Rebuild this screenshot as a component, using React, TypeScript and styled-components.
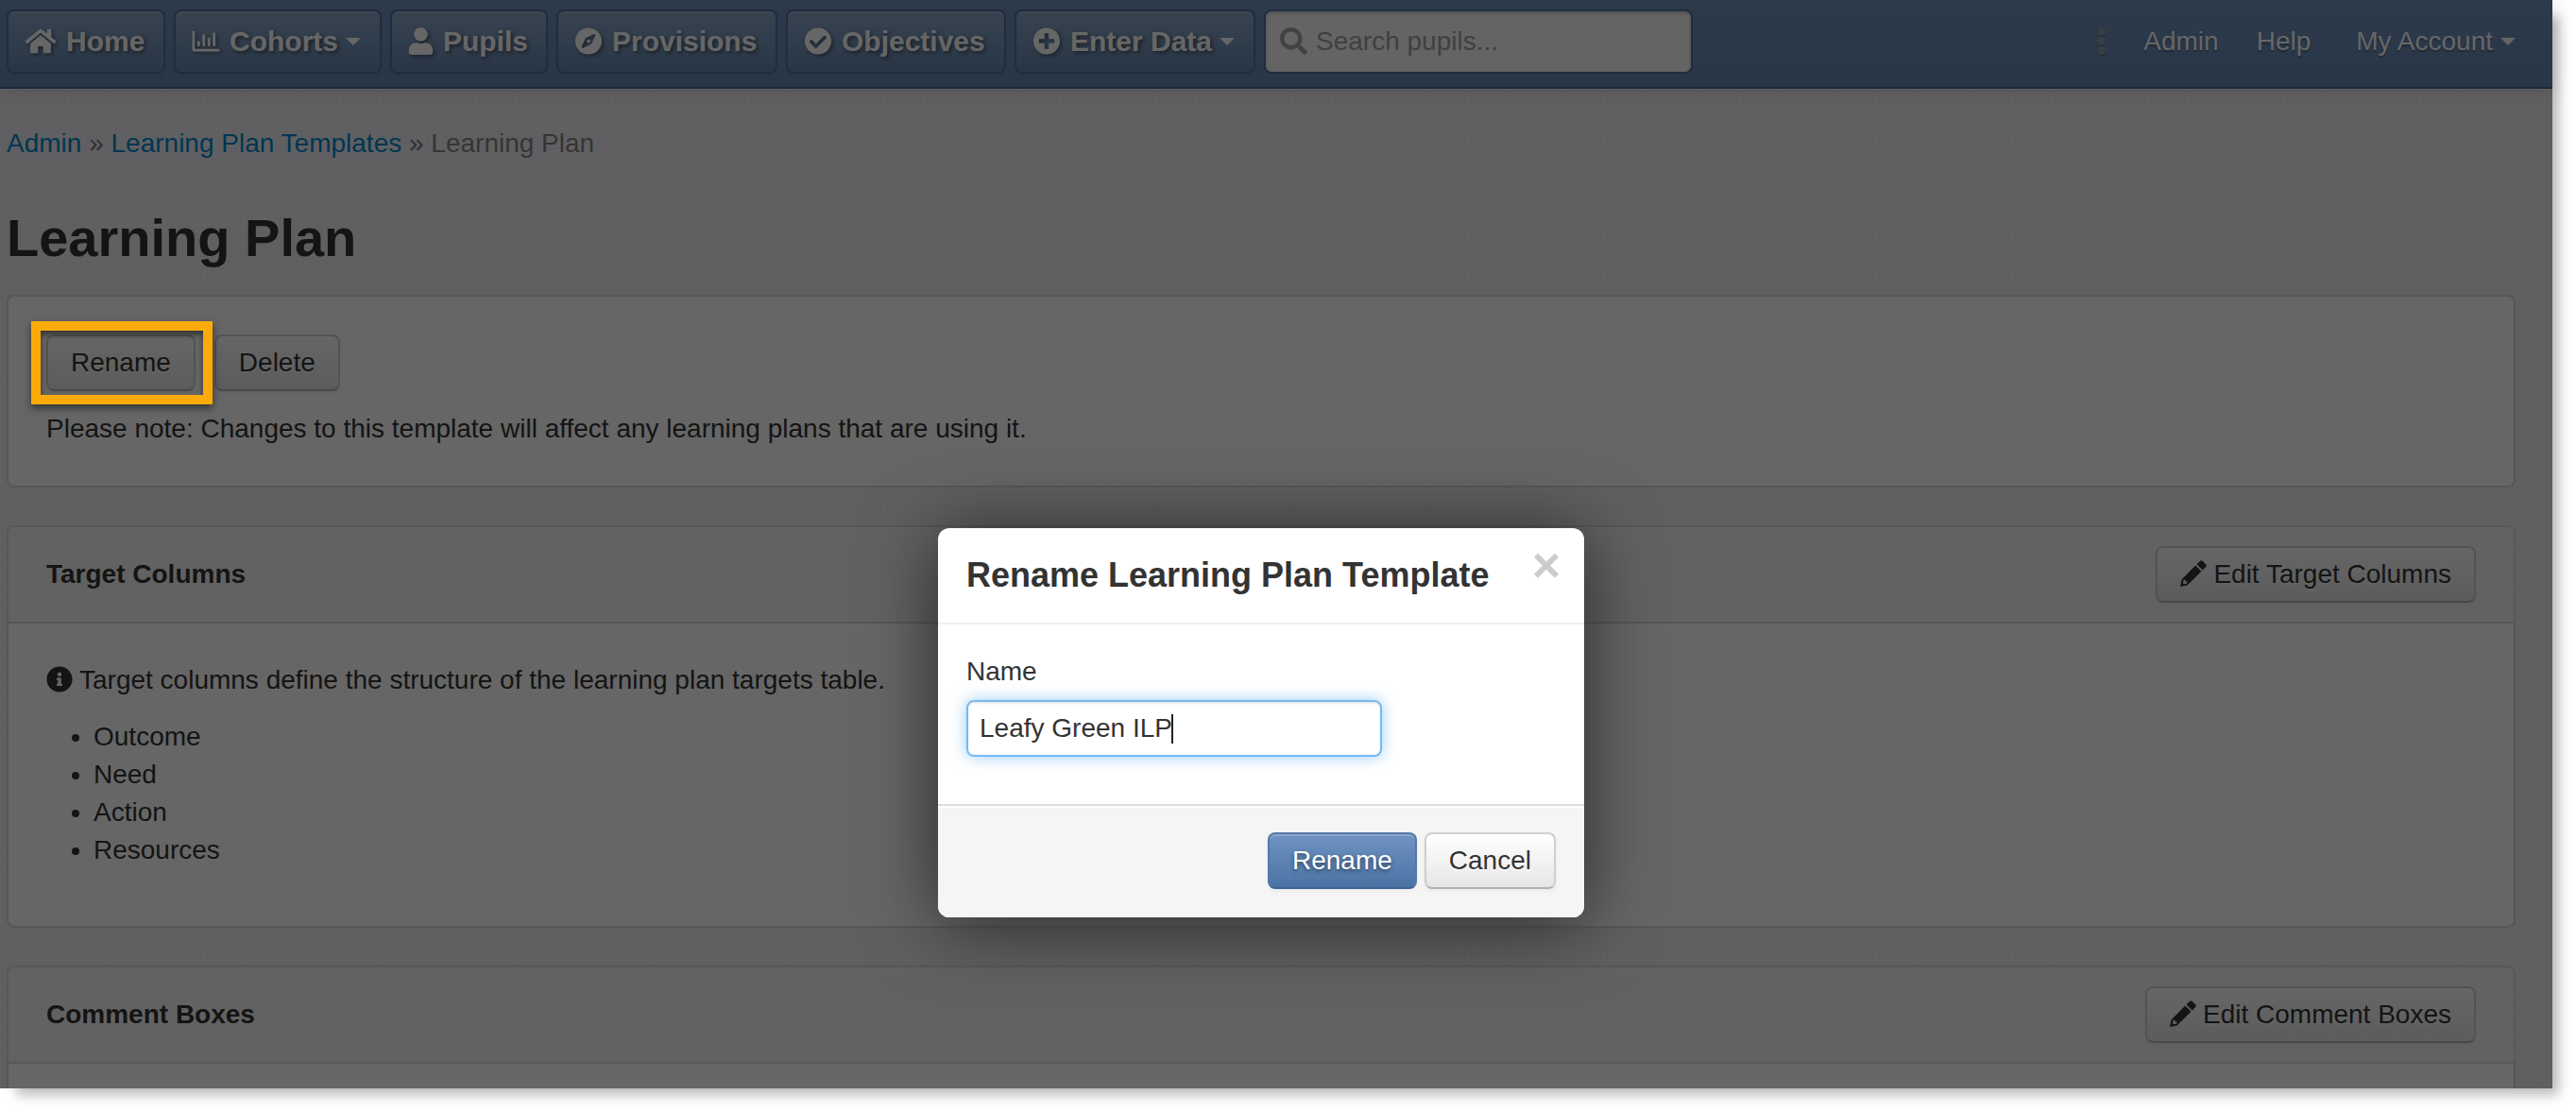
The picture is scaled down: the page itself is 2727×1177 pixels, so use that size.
import styled, { createGlobalStyle, css } from "styled-components";
import {
  FaHome,
  FaRegChartBar,
  FaUser,
  FaCompass,
  FaCheckCircle,
  FaPlusCircle,
  FaSearch,
  FaInfoCircle,
} from "react-icons/fa";

const navItems = [
  { label: "Home", icon: FaHome, iconWidth: 34, width: 168 },
  { label: "Cohorts", icon: FaRegChartBar, iconWidth: 30, caret: true, width: 220 },
  { label: "Pupils", icon: FaUser, iconWidth: 27, width: 167 },
  { label: "Provisions", icon: FaCompass, iconWidth: 30, width: 234 },
  { label: "Objectives", icon: FaCheckCircle, iconWidth: 30, width: 233 },
  { label: "Enter Data", icon: FaPlusCircle, iconWidth: 30, caret: true, width: 255 },
];

const targetColumns = ["Outcome", "Need", "Action", "Resources"];

const Pencil = () => (
  <svg viewBox="0 0 28 28" fill="currentColor">
    <path d="M17.5 4.2 20.8.9q1.5-1.3 3 0l3.3 3.3q1.3 1.4 0 2.9l-3.3 3.3z" />
    <path
      fillRule="evenodd"
      d="M16.2 5.5l6.3 6.3L7.5 26.6 0 28l1.5-7.6zM3.7 20.8l-.8 3.5 1 1 3.5-.8v-2.1H5.5v-1.6z"
    />
  </svg>
);

const App = () => {
  return (
    <>
      <GlobalStyle />
      <Window>
        <Navbar>
          <NavButtons>
            {navItems.map(({ label, icon: Icon, iconWidth, caret, width }) => (
              <NavButton key={label} $width={width} $iconWidth={iconWidth}>
                <Icon />
                <span>{label}</span>
                {caret && <Caret />}
              </NavButton>
            ))}
            <SearchBox>
              <FaSearch />
              <SearchInput placeholder="Search pupils..." />
            </SearchBox>
          </NavButtons>
          <NavLinks>
            <Dots>
              <i />
              <i />
              <i />
            </Dots>
            <NavLink>Admin</NavLink>
            <NavLink>Help</NavLink>
            <AccountLink>
              My Account
              <Caret />
            </AccountLink>
          </NavLinks>
        </Navbar>

        <Content>
          <Breadcrumb>
            <a>Admin</a> » <a>Learning Plan Templates</a> » <span>Learning Plan</span>
          </Breadcrumb>
          <Title>Learning Plan</Title>

          <Card>
            <CardBody>
              <ButtonRow>
                <Highlighted>
                  <Button>Rename</Button>
                </Highlighted>
                <Button>Delete</Button>
              </ButtonRow>
              <Note>
                Please note: Changes to this template will affect any learning plans that are using it.
              </Note>
            </CardBody>
          </Card>

          <Card>
            <CardHeader>
              <CardTitle>Target Columns</CardTitle>
              <Button>
                <Pencil />
                Edit Target Columns
              </Button>
            </CardHeader>
            <CardBody>
              <Info>
                <FaInfoCircle />
                Target columns define the structure of the learning plan targets table.
              </Info>
              <List>
                {targetColumns.map((column) => (
                  <li key={column}>{column}</li>
                ))}
              </List>
            </CardBody>
          </Card>

          <Card>
            <CardHeader>
              <CardTitle>Comment Boxes</CardTitle>
              <Button>
                <Pencil />
                Edit Comment Boxes
              </Button>
            </CardHeader>
            <CardBody />
          </Card>
        </Content>

        <Backdrop>
          <Modal>
            <ModalHeader>
              <ModalTitle>Rename Learning Plan Template</ModalTitle>
              <Close>×</Close>
            </ModalHeader>
            <ModalBody>
              <Label>Name</Label>
              <Field>
                Leafy Green ILP
                <Cursor />
              </Field>
            </ModalBody>
            <ModalFooter>
              <Button $primary>Rename</Button>
              <Button>Cancel</Button>
            </ModalFooter>
          </Modal>
        </Backdrop>
      </Window>
    </>
  );
};

export default App;

const GlobalStyle = createGlobalStyle`
  * {
    box-sizing: border-box;
  }

  body {
    margin: 0;
    min-height: 100vh;
    background: #fff;
    color: #333;
    font: 28px/40px "Liberation Sans", Arial, sans-serif;
  }
`;

const Window = styled.div`
  position: relative;
  width: 2702px;
  height: 1152px;
  box-shadow: 12px 12px 12px -5px rgba(0, 0, 0, 0.27);
`;

const Navbar = styled.header`
  display: flex;
  justify-content: space-between;
  height: 94px;
  padding: 10px 39px 0 7px;
  background: linear-gradient(#7091bc, #6489b5);
  border-bottom: 2px solid #4b6d9e;
  box-shadow: 0 2px 20px rgba(0, 0, 0, 0.12);
  position: relative;
`;

const NavButtons = styled.div`
  display: flex;
  gap: 9px;
`;

const NavButton = styled.div<{ $width: number; $iconWidth: number }>`
  display: flex;
  align-items: center;
  width: ${({ $width }) => $width}px;
  height: 68px;
  padding: 0 0 1px 17px;
  border: 2px solid #5070a0;
  border-radius: 8px;
  background: linear-gradient(#8ba8c5, #6687b2);
  box-shadow: inset 0 2px 0 rgba(255, 255, 255, 0.12), 0 2px 4px rgba(0, 0, 0, 0.05);
  color: #fff;
  font-size: 30px;
  font-weight: bold;
  white-space: nowrap;
  text-shadow: 2px 2px 4px rgba(0, 0, 0, 0.5);

  svg {
    flex: none;
    width: ${({ $iconWidth }) => $iconWidth}px;
    height: 29px;
    margin-right: 10px;
    filter: drop-shadow(2px 2px 2px rgba(0, 0, 0, 0.4));
  }
`;

const Caret = styled.i`
  width: 0;
  height: 0;
  margin-left: 8px;
  border: 8px solid transparent;
  border-top-color: #fff;
  border-bottom: 0;
`;

const SearchBox = styled.div`
  display: flex;
  align-items: center;
  width: 454px;
  height: 68px;
  padding: 0 15px 1px;
  border: 2px solid #5070a0;
  border-radius: 8px;
  background: #fafafc;
  box-shadow: inset 0 2px 4px rgba(0, 0, 0, 0.2);
  color: #a6a6a6;

  svg {
    width: 29px;
    height: 29px;
  }
`;

const SearchInput = styled.input`
  flex: 1;
  min-width: 0;
  padding: 0;
  margin-left: 9px;
  border: 0;
  outline: 0;
  background: none;
  font: inherit;

  &::placeholder {
    color: #a0a0a0;
    opacity: 1;
  }
`;

const NavLinks = styled.nav`
  display: flex;
  align-items: center;
  height: 67px;
  color: #fff;
  text-shadow: 0 2px 2px rgba(0, 0, 0, 0.3);
`;

const Dots = styled.div`
  display: grid;
  gap: 1px;
  margin-right: 40px;

  i {
    width: 9px;
    height: 9px;
    border-radius: 50%;
    background: #8c9ab0;
    box-shadow: 0 1px 2px rgba(0, 0, 0, 0.3);
  }
`;

const NavLink = styled.a`
  margin-right: 40px;
`;

const AccountLink = styled.a`
  display: flex;
  align-items: center;
  margin-left: 8px;
`;

const Content = styled.main`
  height: 1058px;
  padding: 38px 39px 0 7px;
  overflow: hidden;
  background-color: #f1f1f5;
  background-image: radial-gradient(rgba(0, 0, 0, 0.03) 1px, transparent 1.5px);
  background-size: 6px 6px;
`;

const Breadcrumb = styled.div`
  margin-bottom: 40px;
  color: #777;

  a {
    color: #0088cc;
  }

  span {
    color: #858585;
  }
`;

const Title = styled.h1`
  margin: 0 0 20px;
  font-size: 56px;
  line-height: 80px;
`;

const Card = styled.section`
  margin-bottom: 40px;
  border: 2px solid #d9d9d9;
  border-radius: 8px;
  background: #fff;
  overflow: hidden;
`;

const CardHeader = styled.div`
  display: flex;
  align-items: center;
  justify-content: space-between;
  height: 102px;
  padding: 0 40px;
  background: #f6f6f6;
  border-bottom: 2px solid #d9d9d9;
`;

const CardTitle = styled.h2`
  margin: 0;
  font-size: 28px;
`;

const CardBody = styled.div`
  min-height: 100px;
  padding: 40px;
`;

const ButtonRow = styled.div`
  display: flex;
  gap: 20px;
`;

const Button = styled.button<{ $primary?: boolean }>`
  display: flex;
  align-items: center;
  height: 60px;
  padding: 0 24px;
  border: 2px solid #cfcfcf;
  border-bottom-color: #b3b3b3;
  border-radius: 8px;
  background: linear-gradient(#fff, #e6e6e6);
  box-shadow: inset 0 2px 0 rgba(255, 255, 255, 0.2), 0 2px 4px rgba(0, 0, 0, 0.05);
  color: #333;
  font: inherit;
  text-shadow: 0 2px 2px rgba(255, 255, 255, 0.75);

  svg {
    width: 28px;
    height: 28px;
    margin: -2px 7.5px 0 0;
  }

  ${({ $primary }) =>
    $primary &&
    css`
      border-color: #5378a8;
      border-bottom-color: #3f6491;
      background: linear-gradient(#7093c3, #4a73a4);
      color: #fff;
      text-shadow: 0 2px 4px rgba(0, 0, 0, 0.5);
    `}
`;

const Highlighted = styled.div`
  position: relative;

  &::after {
    content: "";
    position: absolute;
    z-index: 3;
    inset: -14px -18px -14px -16px;
    border: 10px solid #faab0a;
    box-shadow: 0 4px 8px rgba(0, 0, 0, 0.5), inset 0 4px 6px rgba(0, 0, 0, 0.5);
  }
`;

const Note = styled.p`
  margin: 20px 0 0;
`;

const Info = styled.p`
  display: flex;
  align-items: center;
  margin: 0 0 20px;

  svg {
    width: 28px;
    height: 28px;
    margin: -3px 7px 0 0;
  }
`;

const List = styled.ul`
  margin: 0 0 20px;
  padding-left: 50px;
`;

const Backdrop = styled.div`
  position: absolute;
  inset: 0;
  z-index: 2;
  display: flex;
  align-items: flex-start;
  padding: 559px 0 0 993px;
  background: rgba(0, 0, 0, 0.6);
`;

const Modal = styled.div`
  width: 684px;
  border-radius: 12px;
  background: #fff;
  box-shadow: 0 6px 80px rgba(0, 0, 0, 0.6);
`;

const ModalHeader = styled.div`
  display: flex;
  justify-content: space-between;
  height: 102px;
  padding: 20px 25px 0 30px;
  border-bottom: 2px solid #eee;
`;

const ModalTitle = styled.h3`
  margin: 0;
  font-size: 36px;
  line-height: 60px;
`;

const Close = styled.span`
  color: #ccc;
  font-size: 52px;
  font-weight: bold;
  line-height: 38px;
`;

const ModalBody = styled.div`
  height: 190px;
  padding: 30px;
`;

const Label = styled.label`
  display: block;
  margin-bottom: 10px;
`;

const Field = styled.div`
  display: flex;
  align-items: center;
  width: 440px;
  height: 60px;
  padding: 0 12px;
  border: 2px solid #75b9f0;
  border-radius: 8px;
  box-shadow: inset 0 2px 2px rgba(0, 0, 0, 0.075), 0 0 16px rgba(82, 168, 236, 0.6);
`;

const Cursor = styled.i`
  width: 2px;
  height: 31px;
  margin-left: -1px;
  background: #222;
`;

const ModalFooter = styled.div`
  display: flex;
  justify-content: flex-end;
  gap: 8px;
  height: 120px;
  padding: 28px 30px 0;
  border-top: 2px solid #ddd;
  border-radius: 0 0 12px 12px;
  background: #f5f5f5;
  box-shadow: inset 0 2px 0 #fff;
`;
